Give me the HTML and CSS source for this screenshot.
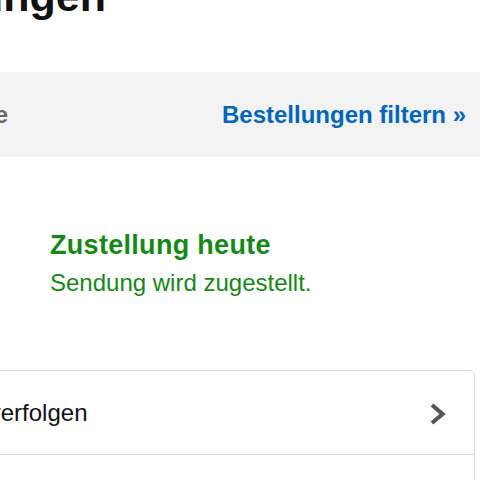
FILE: index.html
```html
<!DOCTYPE html>
<html lang="de">
<head>
<meta charset="utf-8">
<title>Meine Bestellungen</title>
<link rel="stylesheet" href="styles.css">
</head>
<body>
<div class="page">
  <h1 class="title">Bestellungen</h1>
  <div class="band">
    <div class="range"><span>letzte 3 Monate</span></div>
    <a class="filter" href="#">Bestellungen filtern »</a>
  </div>
  <div class="status">
    <div class="status-title">Zustellung heute</div>
    <div class="status-text">Sendung wird zugestellt.</div>
  </div>
  <div class="card">
    <div class="row">
      <span class="row-label">Sendung verfolgen</span>
      <svg class="chev" width="17" height="24" viewBox="0 0 17 24"><path d="M3 3 L13.5 12 L3 21" fill="none" stroke="#555" stroke-width="4.2"/></svg>
    </div>
    <div class="row">
      <span class="row-label">Artikel zurücksenden</span>
      <svg class="chev" width="17" height="24" viewBox="0 0 17 24"><path d="M3 3 L13.5 12 L3 21" fill="none" stroke="#555" stroke-width="4.2"/></svg>
    </div>
  </div>
</div>
</body>
</html>
```
FILE: styles.css
```css
html, body {
  margin: 0;
  padding: 0;
  background: #fff;
}
.page {
  width: 480px;
  height: 480px;
  overflow: hidden;
  font-family: "Liberation Sans", Arial, sans-serif;
}
.title {
  margin: -25px 0 0 -164px;
  font-size: 43px;
  line-height: 42px;
  font-weight: bold;
  color: #111;
  white-space: nowrap;
}
.band {
  margin-top: 55px;
  height: 85px;
  background: #f3f3f3;
  display: flex;
  align-items: center;
  justify-content: space-between;
  padding-right: 14px;
}
.range {
  width: 8px;
  display: flex;
  justify-content: flex-end;
  white-space: nowrap;
  font-size: 24px;
  font-weight: bold;
  color: #666;
}
.filter {
  font-size: 24px;
  font-weight: bold;
  color: #0066c0;
  text-decoration: none;
  white-space: nowrap;
}
.status {
  margin: 72px 0 0 50px;
  color: #138a13;
}
.status-title {
  font-size: 27px;
  line-height: 32px;
  font-weight: bold;
  letter-spacing: 0.3px;
}
.status-text {
  margin-top: 7px;
  font-size: 24px;
  line-height: 30px;
}
.card {
  margin: 72px 5px 0 -150px;
  border: 1px solid #d5d5d5;
  border-radius: 6px;
  background: #fff;
}
.row {
  height: 83px;
  display: flex;
  align-items: center;
  justify-content: space-between;
  padding: 0 28px 0 35px;
  font-size: 24px;
  color: #111;
}
.row + .row {
  border-top: 1px solid #d5d5d5;
}
.chev {
  display: block;
  margin-top: 2px;
}
```
